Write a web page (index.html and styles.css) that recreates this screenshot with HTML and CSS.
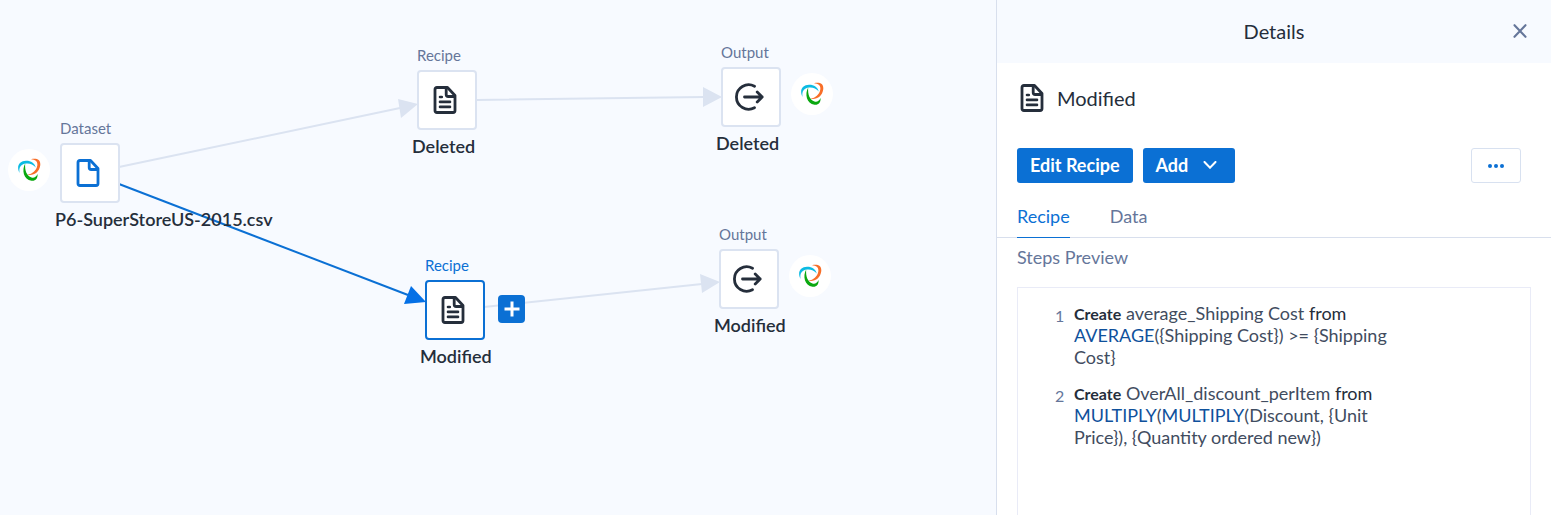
FILE: index.html
```html
<!DOCTYPE html>
<html lang="en">
<head>
<meta charset="utf-8">
<title>Flow</title>
<link rel="stylesheet" href="styles.css">
</head>
<body>
<svg class="sprite" aria-hidden="true">
  <symbol id="file" viewBox="0 0 24 28">
    <path d="M4 1.500H14.500L22 9.500V24.500Q22 26.500 20 26.500H4Q2 26.500 2 24.500V3.500Q2 1.500 4 1.500Z" fill="none" stroke="currentColor" stroke-width="2.800" stroke-linejoin="round"/>
    <path d="M13.200 2V8.500Q13.200 10.500 15.200 10.500H22" fill="none" stroke="currentColor" stroke-width="2.800"/>
  </symbol>
  <symbol id="recipe" viewBox="0 0 24 28">
    <use href="#file"/>
    <path d="M7 11H8.800M7 15.900H17M7 20.900H17" fill="none" stroke="currentColor" stroke-width="2.600" stroke-linecap="round"/>
  </symbol>
  <symbol id="output" viewBox="0 0 30 28">
    <path d="M20.500 3.300A12.200 12.200 0 1 0 20.500 24.700" fill="none" stroke="currentColor" stroke-width="2.800" stroke-linecap="round"/>
    <path d="M10.500 14H28.200M23.200 9L28.200 14L23.200 19" fill="none" stroke="currentColor" stroke-width="2.800" stroke-linecap="round" stroke-linejoin="round"/>
  </symbol>
  <symbol id="brand" viewBox="0 0 24 24">
    <path d="M2.500 15C-1 8 2.500 3 9 2.800C14 2.700 17.500 5 18.800 9.500C16 6.200 12.500 5 9 5.500C4 6.200 1.700 9 2.500 15Z" fill="#0bbbe3"/>
    <path d="M14 1.300C20 -.2 24 2 23.200 7.500C22.300 14 17 18 10.500 16.800C15.500 16 19.200 12.500 20.200 8C21 4 19 1.800 14 1.300Z" fill="#f86e28"/>
    <path d="M8.200 5.500C4.500 12 6.500 21.800 14.500 22.700C18.300 23.200 21 20.500 20.500 16C19 19.200 17 20.200 14.500 19.500C10 18.200 7.500 12.500 8.200 5.500Z" fill="#0aa810"/>
  </symbol>
</svg>
<div class="app">
  <main class="canvas">
    <svg class="edges" aria-hidden="true">
      <g class="edge">
        <path d="M119 167L400 108M477 100L704 97M484 307L702 284"/>
        <polygon points="398,99 418,104 401,118"/>
        <polygon points="703,87 722,97 703,107"/>
        <polygon points="700,274 720,282 702,293"/>
      </g>
      <g class="edge edge-active">
        <path d="M119 184L408 295"/>
        <polygon points="411,286 426,302 404,304"/>
      </g>
    </svg>
    <section class="node node-dataset">
      <div class="kind">Dataset</div>
      <div class="tile"><svg class="glyph"><use href="#file"/></svg></div>
      <div class="name">P6-SuperStoreUS-2015.csv</div>
      <div class="source source-left"><svg class="brand"><use href="#brand"/></svg></div>
    </section>
    <section class="node node-recipe-deleted">
      <div class="kind">Recipe</div>
      <div class="tile"><svg class="glyph"><use href="#recipe"/></svg></div>
      <div class="name">Deleted</div>
    </section>
    <section class="node node-output-deleted">
      <div class="kind">Output</div>
      <div class="tile"><svg class="glyph"><use href="#output"/></svg></div>
      <div class="name">Deleted</div>
      <div class="source source-right"><svg class="brand"><use href="#brand"/></svg></div>
    </section>
    <section class="node node-recipe-modified selected">
      <div class="kind">Recipe</div>
      <div class="tile"><svg class="glyph"><use href="#recipe"/></svg></div>
      <div class="name">Modified</div>
      <button class="plus" aria-label="Add step"><svg viewBox="0 0 16 16" width="16" height="16"><path d="M8 .5V15.500M.5 8H15.500" stroke="currentColor" stroke-width="3"/></svg></button>
    </section>
    <section class="node node-output-modified">
      <div class="kind">Output</div>
      <div class="tile"><svg class="glyph"><use href="#output"/></svg></div>
      <div class="name">Modified</div>
      <div class="source source-right"><svg class="brand"><use href="#brand"/></svg></div>
    </section>
  </main>
  <aside class="details">
    <header class="details-head">
      <h1>Details</h1>
      <button class="close" aria-label="Close"><svg viewBox="0 0 14 14" width="14" height="14"><path d="M1.500 1.200L12.500 12.800M12.500 1.200L1.500 12.800" stroke="currentColor" stroke-width="2.100" stroke-linecap="round"/></svg></button>
    </header>
    <div class="title"><svg class="title-glyph"><use href="#recipe"/></svg><h2>Modified</h2></div>
    <div class="actions">
      <button class="primary">Edit Recipe</button>
      <button class="primary">Add<svg viewBox="0 0 14 8" width="14" height="8"><path d="M1.500 1L7 6.700L12.500 1" fill="none" stroke="currentColor" stroke-width="2" stroke-linecap="round"/></svg></button>
      <button class="more" aria-label="More"><svg viewBox="0 0 16 4" width="16" height="4"><g fill="currentColor"><circle cx="2" cy="2" r="2"/><circle cx="8" cy="2" r="2"/><circle cx="14" cy="2" r="2"/></g></svg></button>
    </div>
    <nav class="tabs" role="tablist">
      <button class="tab active" role="tab" aria-selected="true">Recipe</button>
      <button class="tab" role="tab" aria-selected="false">Data</button>
    </nav>
    <h3 class="preview-title">Steps Preview</h3>
    <div class="preview">
      <div class="step"><span class="num">1</span><p><b>Create</b> average_Shipping Cost <span class="word">from</span> <span class="fn">AVERAGE</span>({Shipping Cost}) &gt;= {Shipping Cost}</p></div>
      <div class="step"><span class="num">2</span><p><b>Create</b> OverAll_discount_perItem <span class="word">from</span> <span class="fn">MULTIPLY</span>(<span class="fn">MULTIPLY</span>(Discount, {Unit Price}), {Quantity ordered new})</p></div>
    </div>
  </aside>
</div>
</body>
</html>
```

FILE: styles.css
```css
* { box-sizing: border-box; }
body { margin: 0; font-family: Lato, "Liberation Sans", sans-serif; color: #252e3b; background: #f7faff; }
button { font: inherit; cursor: pointer; border: 0; padding: 0; background: none; }
h1, h2, h3, p { margin: 0; font-weight: 400; }
svg { display: block; }
.sprite { position: absolute; width: 0; height: 0; }

.app { display: grid; grid-template-columns: minmax(0, 1fr) 555px; height: 100vh; overflow: hidden; }

.canvas { position: relative; overflow: hidden; }
.edges { position: absolute; inset: 0; width: 100%; height: 100%; }
.edge path { fill: none; stroke: #dbe3f1; stroke-width: 2; }
.edge polygon { fill: #dbe3f1; }
.edge-active path { stroke: #0b70d4; }
.edge-active polygon { fill: #0470e6; }

.node { position: absolute; width: 60px; }
.node-dataset { left: 60px; top: 118px; }
.node-recipe-deleted { left: 417px; top: 45px; }
.node-output-deleted { left: 721px; top: 42px; }
.node-recipe-modified { left: 425px; top: 255px; }
.node-output-modified { left: 719px; top: 224px; }
.kind { height: 25px; font-size: 15px; line-height: 21px; color: #65769a; white-space: nowrap; }
.tile { display: grid; place-items: center; width: 60px; height: 60px; background: #fff; border: 2px solid #dbe3f1; border-radius: 4px; }
.glyph { width: 30px; height: 28px; margin-right: 4px; }
.node-dataset .glyph { color: #0b70d4; }
.name { margin: 4px 0 0 -5px; font-size: 18px; line-height: 24px; font-weight: 600; white-space: nowrap; }
.selected .kind { color: #0b70d4; }
.selected .tile { border-color: #0b70d4; }
.source { position: absolute; top: 31px; display: grid; place-items: center; width: 42px; height: 42px; border-radius: 50%; background: #fff; }
.source-left { left: -52px; }
.source-right { left: 70px; }
.brand { width: 24px; height: 24px; }
.plus { position: absolute; left: 73px; top: 40px; display: grid; place-items: center; width: 27px; height: 28px; border-radius: 4px; background: #0b70d4; color: #fff; }

.details { display: flex; flex-direction: column; min-width: 0; background: #fff; border-left: 1px solid #d8dfed; }
.details-head { position: relative; display: flex; justify-content: center; align-items: center; height: 63px; padding-bottom: 2px; flex: none; background: #f7faff; }
.details-head h1, .title h2 { font-size: 20px; line-height: 28px; }
.close { position: absolute; right: 24px; top: 24px; color: #65769a; }
.title { display: flex; align-items: center; gap: 13px; padding: 21px 20px 0 23px; }
.title-glyph { width: 24px; height: 28px; }
.actions { display: flex; gap: 10px; padding: 36px 30px 0 20px; }
.actions button { height: 35px; border-radius: 3px; font-size: 18px; }
.primary { display: flex; align-items: center; gap: 15px; padding: 0 18px 2px 13px; background: #0b70d4; color: #fff; font-weight: 700; }
.primary:first-child { padding-right: 13px; }
.more { display: grid; place-items: center; width: 50px; margin-left: auto; border: 1px solid #d8e1f0; color: #0b70d4; }
.tabs { display: flex; gap: 40px; height: 55px; padding-left: 20px; border-bottom: 1px solid #d8dfed; }
.tab { margin-bottom: -1px; padding-top: 11px; border-bottom: 1px solid transparent; font-size: 18px; color: #65769a; }
.tab.active { color: #0b70d4; border-color: #0b70d4; }
.preview-title { margin: 7px 20px 18px; font-size: 18px; line-height: 24px; color: #65769a; }
.preview { flex: 1; margin: 0 20px; padding: 14px 0 0 37px; border: 1px solid #e9ebf7; border-bottom: 0; }
.step { display: flex; gap: 9px; margin-bottom: 14px; }
.num { width: 10px; padding-top: 3px; font-size: 16px; line-height: 22px; color: #65769a; }
.step p { width: 320px; font-size: 18px; line-height: 22px; color: #414c60; }
.step b { font-size: 16px; line-height: 16px; color: #252e3b; }
.word { color: #252e3b; }
.fn { color: #0f519c; }
```
